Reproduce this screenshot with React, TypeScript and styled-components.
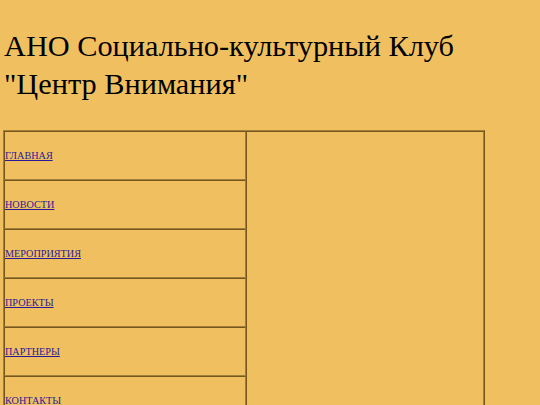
import React from 'react'
import styled, { createGlobalStyle } from 'styled-components'

const GlobalStyle = createGlobalStyle`
  html, body {
    margin: 0;
    padding: 0;
    background: #f0c060;
  }
  body {
    font-family: 'Liberation Serif', 'Times New Roman', serif;
    color: #000000;
  }
`

const Page = styled.div`
  padding: 6px 0 0 3px;
`

const Title = styled.h1`
  margin: 21px 0 27px 1px;
  font-size: 30.3px;
  font-weight: normal;
  line-height: 38px;
`

const Frame = styled.div`
  display: grid;
  grid-template-columns: 242px 238px;
  grid-auto-rows: 49px;
  width: 480px;
  border: 1px solid;
  border-color: #a08038 #76561a #76561a #a08038;
`

const MenuCell = styled.div`
  display: flex;
  align-items: center;
  padding: 0 1px 0 0;
  border: 1px solid;
  border-color: #76561a #a08038 #a08038 #76561a;
`

const ContentCell = styled.div<{ $rows: number }>`
  grid-column: 2;
  grid-row: 1 / span ${(p) => p.$rows};
  border: 1px solid;
  border-color: #76561a #a08038 #a08038 #76561a;
`

const MenuLink = styled.a`
  font-size: 10.2px;
  color: #2a1a9a;
  text-decoration: underline;
`

const menu = ['ГЛАВНАЯ', 'НОВОСТИ', 'МЕРОПРИЯТИЯ', 'ПРОЕКТЫ', 'ПАРТНЕРЫ', 'КОНТАКТЫ']

export default function App() {
  return (
    <>
      <GlobalStyle />
      <Page>
        <Title>
          АНО Социально-культурный Клуб
          <br />
          "Центр Внимания"
        </Title>
        <Frame>
          {menu.map((item, i) => (
            <MenuCell key={item} style={{ gridRow: i + 1 }}>
              <MenuLink href="#">{item}</MenuLink>
            </MenuCell>
          ))}
          <ContentCell $rows={menu.length} />
        </Frame>
      </Page>
    </>
  )
}
